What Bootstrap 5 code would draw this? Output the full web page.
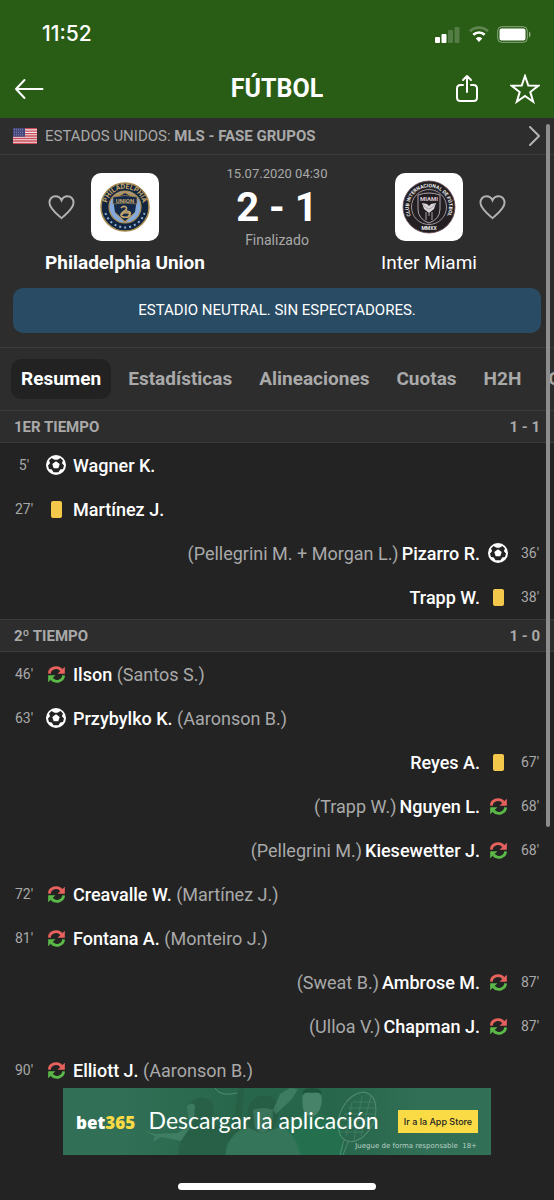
<!DOCTYPE html>
<html lang="es">
<head>
<meta charset="utf-8">
<meta name="viewport" content="width=device-width, initial-scale=1">
<title>Fútbol: Philadelphia Union - Inter Miami</title>
<link href="https://cdn.jsdelivr.net/npm/bootstrap@5.3.0/dist/css/bootstrap.min.css" rel="stylesheet">
<style>
  body { background: #232323; color: #fff; font-family: Roboto, "Liberation Sans", sans-serif; }
  a { color: inherit; text-decoration: none; }
  svg { display: block; flex: none; }
  .icon-btn { background: none; border: 0; padding: 0; color: inherit; line-height: 0; }
  .app-top { background: #295d16; height: 118px; }
  .status-line { height: 60px; padding: 8px 23px 0 42px; font: 500 21px/24px Inter, sans-serif; }
  .title-line { height: 58px; padding: 0 14px; }
  .title-line > div { flex: 1 1 0; }
  .app-title { font-size: 25px; line-height: 32px; font-weight: 700; }
  .panel { background: #2d2d2d; }
  .rule { border-bottom: 1px solid #3b3b3b; }
  .soft { color: #a9a9a9; }
  .league { height: 37px; padding: 0 14px 0 13px; font-size: 15px; }
  .match { padding: 18px 13px 14px; }
  .club { width: 176px; }
  .crest { background: #fff; border-radius: 10px; width: 68px; height: 68px; }
  .crest-home { margin-right: 43px; }
  .crest-away { margin-left: 43px; }
  .club-name { font-size: 19px; line-height: 24px; margin-top: 10px; }
  .centre { width: 104px; margin: -8px -16px 0; }
  .when { font-size: 13px; line-height: 18px; }
  .state { font-size: 14px; line-height: 16px; }
  .score { font-size: 40px; line-height: 48px; font-weight: 700; padding-top: 1px; }
  .notice { background: #294b64; border-radius: 10px; height: 45px; margin-top: 13px; font-size: 15px; }
  .tabs { height: 63px; padding: 0 11px; overflow: hidden; }
  .tabs .nav-link { color: #a9a9a9; font-size: 19px; line-height: 24px; font-weight: 700; padding: 8px 10px; border-radius: 10px; margin-right: 7px; white-space: nowrap; }
  .tabs .nav-link.active { background: #222; color: #fff; }
  .period { height: 32px; padding: 0 14px; font-size: 15px; font-weight: 700; margin: 0; }
  .event + .period { height: 33px; border-top: 1px solid #3b3b3b; }
  .event { height: 44px; padding: 0 14px; font-size: 18px; }
  .event .minute { font-size: 14px; width: 20px; text-align: center; white-space: nowrap; }
  .event .mark-icon { width: 20px; margin: 0 7px 0 12px; display: flex; justify-content: center; }
  .event.away .mark-icon { margin: 0 12px 0 8px; }
  .pair { display: flex; gap: 3px; }
  .scroll-thumb { position: absolute; right: 4px; top: 6px; width: 4px; height: 703px; border-radius: 2px; background: #8d8d8d; }
  .app-foot { height: 112px; }
  .ad { position: relative; width: 428px; height: 67px; background: #316f56; overflow: hidden; }
  .ad-art { position: absolute; inset: 0; }
  .ad-copy { position: relative; height: 67px; padding: 0 13px; }
  .brand { font: 800 17px/24px "Open Sans", sans-serif; padding-top: 2px; }
  .brand span { color: #fadb45; }
  .slogan { font: 400 23px/28px Lato, sans-serif; padding-bottom: 4px; margin-right: 6px; }
  .store { background: #fadb45; color: #222; border: 0; border-radius: 0; padding: 0; width: 80px; height: 23px; font: 500 9px/23px Inter, sans-serif; white-space: nowrap; }
  .legal { position: absolute; right: 14px; bottom: 4px; font: 7px/10px "DejaVu Sans", sans-serif; color: #b8cfc4; }
  .home-bar { width: 198px; height: 7px; border-radius: 4px; background: #fff; margin-top: 28px; }
</style>
</head>
<body>
<svg width="0" height="0" class="position-absolute" aria-hidden="true">
  <defs>
    <symbol id="ball" viewBox="0 0 20 20">
      <circle cx="10" cy="10" r="10" fill="#fff"/>
      <path fill="#232323" d="M5.500 3 8.500 4.800H11.500L14.500 3 17 5.500 15.900 8.200 18 10.500 17 14 14.200 14.400 12.500 17.200H7.500L5.800 14.400 3 14 2 10.500 4.100 8.200 3 5.500Z"/>
      <path fill="#fff" d="m10 6.300 3.700 2.700-1.400 4.200H7.700L6.300 9Z"/>
    </symbol>
    <symbol id="swap" viewBox="0 0 16 16">
      <path d="M1.300 7.200A6.300 5.800 0 0 1 12.700 4" fill="none" stroke="#e8625d" stroke-width="2.700"/>
      <path d="M15.800.8v6.400H9Z" fill="#e8625d"/>
      <path d="M14.700 8.800A6.300 5.800 0 0 1 3.300 12" fill="none" stroke="#5bb947" stroke-width="2.700"/>
      <path d="M.2 15.200V8.800H7Z" fill="#5bb947"/>
    </symbol>
    <symbol id="booking" viewBox="0 0 11 17"><rect width="11" height="17" rx="2" fill="#f3c84b"/></symbol>
    <symbol id="heart" viewBox="0 0 28 26">
      <path d="M14 24.500C9 20 1.500 14.500 1.500 8.500 1.500 4.500 4.300 1.800 7.700 1.800 10.400 1.800 12.800 3.200 14 6c1.200-2.800 3.600-4.200 6.300-4.200 3.400 0 6.200 2.700 6.200 6.700 0 6-7.500 11.500-12.500 16Z" fill="none" stroke="#b2b2b2" stroke-width="2"/>
    </symbol>
  </defs>
</svg>
<div class="d-flex flex-column vh-100 overflow-hidden">
  <header class="app-top flex-shrink-0">
    <div class="status-line d-flex align-items-center justify-content-between">
      <span>11:52</span>
      <div class="d-flex align-items-center gap-2">
        <svg width="26" height="17" viewBox="0 0 26 17" fill="#fff"><rect y="11" width="5" height="6" rx="1"/><rect x="6.500" y="8" width="5" height="9" rx="1"/><g opacity=".2"><rect x="13" y="4" width="5" height="13" rx="1"/><rect x="19.500" y="1" width="5" height="16" rx="1"/></g></svg>
        <svg width="20" height="16" viewBox="0 0 20 16" fill="none" stroke="#fff" stroke-width="2.600"><path d="M1 5.200a13 13 0 0 1 18 0" opacity=".25"/><path d="M4.300 8.700a8.300 8.300 0 0 1 11.400 0"/><path d="m10 16-3.200-3.600a5 5 0 0 1 6.400 0Z" fill="#fff" stroke="none"/></svg>
        <svg width="34" height="17" viewBox="0 0 34 17"><rect x=".7" y=".7" width="29.600" height="15.600" rx="4" fill="none" stroke="#fff" stroke-opacity=".45"/><rect x="2.500" y="2.500" width="26" height="12" rx="2" fill="#fff"/><path d="M32 5.500c2 1 2 5 0 6Z" fill="#fff" opacity=".5"/></svg>
      </div>
    </div>
    <div class="title-line d-flex align-items-center">
      <div class="d-flex"><button class="icon-btn" aria-label="Volver"><svg width="30" height="22" viewBox="0 0 30 22" fill="none" stroke="#fff" stroke-width="2" stroke-linecap="round" stroke-linejoin="round"><path d="M28.500 11H2M10.500 2 2 11l8.500 9"/></svg></button></div>
      <h1 class="app-title m-0">FÚTBOL</h1>
      <div class="d-flex justify-content-end align-items-center">
        <button class="icon-btn me-4" aria-label="Compartir"><svg class="me-2" width="22" height="30" viewBox="0 0 22 30" fill="none" stroke="#fff" stroke-width="2" stroke-linecap="round" stroke-linejoin="round"><path d="M7 11H4.500Q1 11 1 14.500v9Q1 27 4.500 27h13q3.500 0 3.500-3.500v-9Q21 11 17.500 11H15M11 18V2M7 6l4-4 4 4"/></svg></button>
        <button class="icon-btn" aria-label="Favorito"><svg width="30" height="30" viewBox="0 0 30 30" fill="none" stroke="#fff" stroke-width="2"><path d="m15 2 3.300 9.600 10 .2-8 6.200 2.900 9.700-8.200-5.700-8.200 5.700 2.900-9.700-8-6.200 10-.2Z"/></svg></button>
      </div>
    </div>
  </header>

  <main class="position-relative flex-grow-1 overflow-hidden">
    <a href="#" class="league panel rule soft d-flex align-items-center">
      <svg class="me-2" width="24" height="16" viewBox="0 0 24 16"><path fill="#f0e9ea" d="M0 0h24v16H0z"/><path stroke="#cc4a57" stroke-width="1.300" d="M0 .6h24M0 3.100h24M0 5.600h24M0 8h24M0 10.500h24M0 13h24M0 15.400h24"/><path fill="#46467f" d="M0 0h12v8.700H0z"/><path d="M1 1.800h10M1 4.300h10M1 6.800h10" stroke="#8587ad" stroke-dasharray="1 1"/></svg>
      <span class="flex-grow-1">ESTADOS UNIDOS: <b>MLS - FASE GRUPOS</b></span>
      <svg width="11" height="20" viewBox="0 0 11 20" fill="none" stroke="#b2b2b2" stroke-width="2" stroke-linecap="round"><path d="m1 1 9 9-9 9"/></svg>
    </a>

    <section class="match panel rule">
      <div class="d-flex justify-content-between px-4">
        <div class="club text-center flex-shrink-0">
          <div class="d-flex align-items-center justify-content-center">
            <button class="icon-btn me-3" aria-label="Seguir a Philadelphia Union"><svg width="27" height="26"><use href="#heart"/></svg></button>
            <div class="crest crest-home d-flex align-items-center justify-content-center">
              <svg width="50" height="50" viewBox="0 0 50 50">
                <defs><path id="ringA" d="M7.500 30A18.200 18.200 0 1 1 42.500 30"/></defs>
                <circle cx="25" cy="25" r="24" fill="#112440" stroke="#a78b50" stroke-width="1.500"/>
                <circle cx="25" cy="25" r="16" fill="#83a9dc" stroke="#ab8d50" stroke-width="1.200"/>
                <path d="M15 13 25 9l10 4v18L25 41 15 31Z" fill="#b4935a"/>
                <path d="m13 17 7-3 5-3 5 3 7 3-2 13-10 9-10-9Z" fill="#14294a"/>
                <path d="M13 15q12-3 24 0v7q-12-2-24 0Z" fill="#14294a" stroke="#a78b50" stroke-width=".7"/>
                <text x="25" y="21" text-anchor="middle" font-size="6" font-weight="700" fill="#c5a66b">UNION</text>
                <path d="M21 26c3-3 7-1 5 2-3 2-5 3-5 5 0 3 9 3 9 0s-8-3-8 0M25 29c6 0 7 3 3 5" fill="none" stroke="#c5a66b" stroke-width="1.700"/>
                <text font-size="7" font-weight="700" fill="#c5a66b"><textPath href="#ringA" startOffset="50%" text-anchor="middle">PHILADELPHIA</textPath></text>
                <path d="M5.500 31a20.400 20.400 0 0 0 39 0" fill="none" stroke="#8bb0dc" stroke-width="2" stroke-dasharray="2 3"/>
              </svg>
            </div>
          </div>
          <div class="club-name fw-bold text-nowrap">Philadelphia Union</div>
        </div>
        <div class="centre flex-shrink-0 text-center text-nowrap soft">
          <div class="when">15.07.2020 04:30</div>
          <div class="score text-white">2 - 1</div>
          <div class="state">Finalizado</div>
        </div>
        <div class="club text-center flex-shrink-0">
          <div class="d-flex align-items-center justify-content-center">
            <div class="crest crest-away d-flex align-items-center justify-content-center me-3">
              <svg width="54" height="54" viewBox="0 0 54 54">
                <defs><path id="ringB" d="M13 41.500A20 20 0 1 1 41 41.500"/></defs>
                <circle cx="27" cy="27" r="26" fill="#231f23" stroke="#6b4f5a" stroke-width=".8"/>
                <circle cx="27" cy="27" r="17.500" fill="none" stroke="#cfc4c9" stroke-width=".7"/>
                <path d="M16 15q11-4 22 0v14q0 10-11 14-11-4-11-14Z" fill="#211d21" stroke="#bdb2b7" stroke-width=".9"/>
                <text x="27" y="20.500" text-anchor="middle" font-size="6" font-weight="700" fill="#dfc7d1">MIAMI</text>
                <path d="m20 23 5 1 2 2 2-2 5-1-2 6-5 4-5-4Z" fill="#d9d5d8"/>
                <path d="M24 32v8M30 32v8M27 33v3M20 23q4 6 7 6t7-6" stroke="#aaa1a6" fill="none"/>
                <text font-size="5" font-weight="700" fill="#eee"><textPath href="#ringB" startOffset="50%" text-anchor="middle">CLUB INTERNACIONAL DE FÚTBOL</textPath></text>
                <text x="27" y="50" text-anchor="middle" font-size="5" font-weight="700" fill="#eee">MMXX</text>
              </svg>
            </div>
            <button class="icon-btn" aria-label="Seguir a Inter Miami"><svg width="27" height="26"><use href="#heart"/></svg></button>
          </div>
          <div class="club-name">Inter Miami</div>
        </div>
      </div>
      <div class="notice d-flex align-items-center justify-content-center">ESTADIO NEUTRAL. SIN ESPECTADORES.</div>
    </section>

    <nav class="tabs nav flex-nowrap panel rule align-items-center">
      <a class="nav-link active" href="#">Resumen</a>
      <a class="nav-link" href="#">Estadísticas</a>
      <a class="nav-link" href="#">Alineaciones</a>
      <a class="nav-link" href="#">Cuotas</a>
      <a class="nav-link" href="#">H2H</a>
      <a class="nav-link" href="#">Clasificación</a>
    </nav>

    <h2 class="period panel rule soft d-flex align-items-center justify-content-between"><span>1ER TIEMPO</span><span>1 - 1</span></h2>
    <div class="event d-flex align-items-center"><span class="minute soft">5'</span><span class="mark-icon"><svg width="20" height="20"><use href="#ball"/></svg></span><span class="fw-medium">Wagner K.</span></div>
    <div class="event d-flex align-items-center"><span class="minute soft">27'</span><span class="mark-icon"><svg width="11" height="17"><use href="#booking"/></svg></span><span class="fw-medium">Martínez J.</span></div>
    <div class="event away d-flex align-items-center justify-content-end"><span class="pair"><span class="soft">(Pellegrini M. + Morgan L.)</span> <span class="fw-medium">Pizarro R.</span></span><span class="mark-icon"><svg width="20" height="20"><use href="#ball"/></svg></span><span class="minute soft">36'</span></div>
    <div class="event away d-flex align-items-center justify-content-end"><span class="fw-medium">Trapp W.</span><span class="mark-icon"><svg width="11" height="17"><use href="#booking"/></svg></span><span class="minute soft">38'</span></div>

    <h2 class="period panel rule soft d-flex align-items-center justify-content-between"><span>2º TIEMPO</span><span>1 - 0</span></h2>
    <div class="event d-flex align-items-center"><span class="minute soft">46'</span><span class="mark-icon"><svg width="17" height="17"><use href="#swap"/></svg></span><span><span class="fw-medium">Ilson</span> <span class="soft">(Santos S.)</span></span></div>
    <div class="event d-flex align-items-center"><span class="minute soft">63'</span><span class="mark-icon"><svg width="20" height="20"><use href="#ball"/></svg></span><span><span class="fw-medium">Przybylko K.</span> <span class="soft">(Aaronson B.)</span></span></div>
    <div class="event away d-flex align-items-center justify-content-end"><span class="fw-medium">Reyes A.</span><span class="mark-icon"><svg width="11" height="17"><use href="#booking"/></svg></span><span class="minute soft">67'</span></div>
    <div class="event away d-flex align-items-center justify-content-end"><span class="pair"><span class="soft">(Trapp W.)</span> <span class="fw-medium">Nguyen L.</span></span><span class="mark-icon"><svg width="17" height="17"><use href="#swap"/></svg></span><span class="minute soft">68'</span></div>
    <div class="event away d-flex align-items-center justify-content-end"><span class="pair"><span class="soft">(Pellegrini M.)</span> <span class="fw-medium">Kiesewetter J.</span></span><span class="mark-icon"><svg width="17" height="17"><use href="#swap"/></svg></span><span class="minute soft">68'</span></div>
    <div class="event d-flex align-items-center"><span class="minute soft">72'</span><span class="mark-icon"><svg width="17" height="17"><use href="#swap"/></svg></span><span><span class="fw-medium">Creavalle W.</span> <span class="soft">(Martínez J.)</span></span></div>
    <div class="event d-flex align-items-center"><span class="minute soft">81'</span><span class="mark-icon"><svg width="17" height="17"><use href="#swap"/></svg></span><span><span class="fw-medium">Fontana A.</span> <span class="soft">(Monteiro J.)</span></span></div>
    <div class="event away d-flex align-items-center justify-content-end"><span class="pair"><span class="soft">(Sweat B.)</span> <span class="fw-medium">Ambrose M.</span></span><span class="mark-icon"><svg width="17" height="17"><use href="#swap"/></svg></span><span class="minute soft">87'</span></div>
    <div class="event away d-flex align-items-center justify-content-end"><span class="pair"><span class="soft">(Ulloa V.)</span> <span class="fw-medium">Chapman J.</span></span><span class="mark-icon"><svg width="17" height="17"><use href="#swap"/></svg></span><span class="minute soft">87'</span></div>
    <div class="event d-flex align-items-center"><span class="minute soft">90'</span><span class="mark-icon"><svg width="17" height="17"><use href="#swap"/></svg></span><span><span class="fw-medium">Elliott J.</span> <span class="soft">(Aaronson B.)</span></span></div>
    <div class="scroll-thumb"></div>
  </main>

  <footer class="app-foot flex-shrink-0 d-flex flex-column align-items-center">
    <div class="ad">
      <svg class="ad-art" width="428" height="67" viewBox="0 0 428 67">
        <defs><linearGradient id="shade"><stop offset="0" stop-color="#28664b" stop-opacity="0"/><stop offset=".4" stop-color="#28664b"/><stop offset=".7" stop-color="#28664b"/><stop offset="1" stop-color="#28664b" stop-opacity="0"/></linearGradient></defs>
        <path fill="url(#shade)" d="M60 0h300v67H60z"/>
        <path fill="#265c43" d="M115 67q2-22 14-27-7-16-2-25 10-10 21-2 6 9-1 24l22 3 7-40h5l-4 45-14 10v12Z" opacity=".7"/>
        <path fill="#3d7f64" d="M162 67q4-24 24-28l14 6 18-6q18 8 20 28Z" opacity=".6"/>
        <path fill="#265c43" d="M186 40q-3-17 1-25 12-14 26-3 5 10-1 28l-12 6Z" opacity=".8"/>
        <path fill="#4b8a70" d="M190 22q10-4 20 0 0 12-4 20l-6 4-8-5Z" opacity=".5"/>
        <path fill="#23734f" d="m222 35 18-9 8 5 10-5 19 9 4 32h-44q-4-18-15-26Z" opacity=".8"/>
        <path fill="#5b967d" d="M240 5h18q3 12-4 21l-6 4-6-4q-4-8-2-21Z" opacity=".6"/>
        <path fill="#1f543c" d="M240 7q-2-7 9-7 11 0 9 7l-3-3h-12Z"/>
        <path fill="#4b8a70" d="m82 43 10 3 22-1 14-7-10 15-20-4-8 5 2-6ZM217 6l10-6 8 1-6 10-16 15-3-4ZM124 18q6-5 8 0l-1 14-5 4Z" opacity=".6"/>
        <g fill="none" stroke="#6ba088" opacity=".6"><ellipse cx="294" cy="29" rx="17" ry="26" transform="rotate(25 294 29)"/><path d="m281 52-4 15M285 54l-5 13"/><path d="m290 14 24 0M285 20h28M281 26h31M279 32h30M277 38h28M277 44h23M289 14l-6 34M299 8l-8 44M308 8l-10 40" stroke-width=".5"/><path d="M152 0q5 9 22 5"/></g>
      </svg>
      <div class="ad-copy d-flex align-items-center justify-content-between">
        <span class="brand">bet<span>365</span></span>
        <span class="slogan">Descargar la aplicación</span>
        <button class="store">Ir a la App Store</button>
      </div>
      <div class="legal">Juegue de forma responsable &nbsp;18+</div>
    </div>
    <div class="home-bar"></div>
  </footer>
</div>
<script src="https://cdn.jsdelivr.net/npm/bootstrap@5.3.0/dist/js/bootstrap.bundle.min.js"></script>
</body>
</html>
